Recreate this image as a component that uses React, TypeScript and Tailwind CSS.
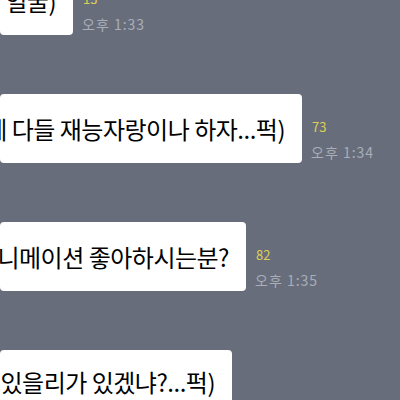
import React from "react";

type Msg = { text: string; width: number; count: string; time: string; tall?: boolean };

const msgs: Msg[] = [
  { text: "(부끄 얼굴)", width: 73, count: "13", time: "1:33" },
  { text: "이제 다들 재능자랑이나 하자...퍽)", width: 302, count: "73", time: "1:34" },
  { text: "혹시 애니메이션 좋아하시는분?", width: 246, count: "82", time: "1:35" },
  { text: "그럴리가 있을리가 있겠냐?...퍽)", width: 232, count: "91", time: "1:36", tall: true },
];

const font = { fontFamily: '"Noto Sans CJK KR", "Noto Sans", sans-serif' };

export default function App() {
  return (
    <div
      className="w-[400px] h-[400px] overflow-hidden bg-[#676d7b]"
      style={font}
    >
      <div className="flex flex-col gap-[59px] mt-[-34px]">
        {msgs.map((m, i) => (
          <div key={i} className="flex items-end gap-[9px]">
            <div
              className={
                m.tall
                  ? "h-[110px] shrink-0 bg-white rounded-[4px] flex items-start justify-end pt-[17px] pr-[17px] overflow-hidden"
                  : "h-[69px] shrink-0 bg-white rounded-[4px] flex items-center justify-end pr-[17px] overflow-hidden"
              }
              style={{ width: m.width }}
            >
              <span className="whitespace-nowrap text-[24px] leading-[29px] tracking-[-0.5px] text-black">
                {m.text}
              </span>
            </div>
            <div className="flex flex-col items-start pb-[3px]">
              <span className="text-[13px] leading-[14px] text-[#ddd054] ml-[1px]">
                {m.count}
              </span>
              <span className="mt-[10px] text-[14px] leading-[16px] tracking-[1px] text-[#a9aeb8] whitespace-nowrap">
                오후 {m.time}
              </span>
            </div>
          </div>
        ))}
      </div>
    </div>
  );
}
